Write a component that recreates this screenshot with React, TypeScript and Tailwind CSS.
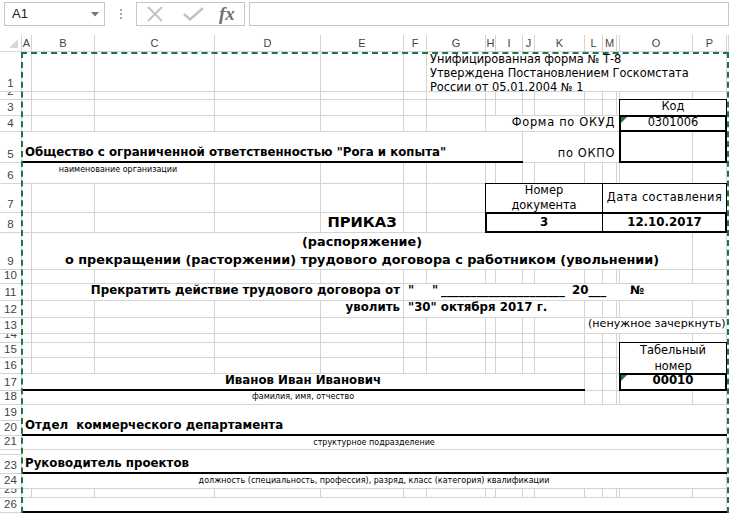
import React from "react";

type Seg = { r: number; c: number; cs?: number; rs?: number; cls?: string; node?: React.ReactNode };
type Ov = { r: number; c: number; cs?: number; rs?: number; cls: string };

const LETTERS = ["A", "B", "C", "D", "E", "F", "G", "H", "I", "J", "K", "L", "M", "", "O", "P", ""];
const ROWS = 26;
const COLS = 16;

const B = "font-bold text-[11.8px]";

const segs: Seg[] = [
  {
    r: 1, c: 7, cs: 10,
    cls: "flex flex-col justify-start pl-[3px] leading-[14px]",
    node: (
      <>
        <span>Унифицированная форма № Т-8</span>
        <span>Утверждена Постановлением Госкомстата</span>
        <span>России от 05.01.2004 № 1</span>
      </>
    ),
  },
  { r: 3, c: 15, cs: 2, cls: "flex items-end justify-center", node: "Код" },
  { r: 4, c: 8, cs: 7, cls: "flex items-end justify-end pr-[4px] tracking-[0.7px]", node: "Форма по ОКУД" },
  { r: 4, c: 15, cs: 2, cls: "flex items-end justify-center", node: "0301006" },
  {
    r: 5, c: 1, cs: 9, cls: "flex items-end pl-[3px] " + B,
    node: 'Общество с ограниченной ответственностью "Рога и копыта"',
  },
  { r: 5, c: 10, cs: 5, cls: "flex items-end justify-end pr-[4px] tracking-[0.65px]", node: "по ОКПО" },
  { r: 6, c: 1, cs: 3, cls: "flex items-start justify-center text-[8px] pt-[1px]", node: "наименование организации" },
  {
    r: 7, c: 8, cs: 5, cls: "flex flex-col items-center justify-center leading-[15px]",
    node: (
      <>
        <span>Номер</span>
        <span>документа</span>
      </>
    ),
  },
  { r: 7, c: 13, cs: 4, cls: "flex items-center justify-center tracking-[0.4px]", node: "Дата составления" },
  { r: 8, c: 5, cls: "flex items-center justify-center font-bold text-[14.7px]", node: "ПРИКАЗ" },
  { r: 8, c: 8, cs: 5, cls: "flex items-center justify-center " + B, node: "3" },
  { r: 8, c: 13, cs: 4, cls: "flex items-center justify-center " + B, node: "12.10.2017" },
  {
    r: 9, c: 2, cs: 14, cls: "flex flex-col items-center justify-center font-bold text-[12.8px] leading-[18.5px]",
    node: (
      <>
        <span>(распоряжение)</span>
        <span>о прекращении (расторжении) трудового договора с работником (увольнении)</span>
      </>
    ),
  },
  {
    r: 11, c: 2, cs: 4, cls: "flex items-end justify-end pr-[3px] " + B,
    node: "Прекратить действие трудового договора от",
  },
  {
    r: 11, c: 6, cs: 11, cls: "flex items-end " + B,
    node: (
      <>
        <span className="w-[4px] shrink-0" />
        <span className="w-[24px] shrink-0">"</span>
        <span className="w-[9px] shrink-0">"</span>
        <span className="w-[127px] shrink-0 overflow-hidden">_____________________</span>
        <span className="w-[4px] shrink-0" />
        <span className="w-[58px] shrink-0 whitespace-pre">20___</span>
        <span>№</span>
      </>
    ),
  },
  { r: 12, c: 5, cls: "flex items-end justify-end pr-[3px] " + B, node: "уволить" },
  { r: 12, c: 6, cs: 6, cls: "flex items-end pl-[4px] " + B, node: '"30" октября 2017 г.' },
  { r: 13, c: 12, cs: 5, cls: "flex items-end pl-[3px] text-[11.1px]", node: "(ненужное зачеркнуть)" },
  {
    r: 15, c: 15, cs: 2, rs: 2, cls: "flex flex-col items-center justify-center leading-[16.5px]",
    node: (
      <>
        <span>Табельный</span>
        <span>номер</span>
      </>
    ),
  },
  { r: 17, c: 1, cs: 11, cls: "flex items-end justify-center " + B, node: "Иванов Иван Иванович" },
  { r: 17, c: 15, cs: 2, cls: "flex items-end justify-center " + B, node: "00010" },
  { r: 18, c: 1, cs: 11, cls: "flex items-end justify-center text-[8px] pb-[1px]", node: "фамилия, имя, отчество" },
  {
    r: 19, c: 1, cs: 16, rs: 2, cls: "flex items-end pl-[3px] whitespace-pre " + B,
    node: "Отдел  коммерческого департамента",
  },
  { r: 21, c: 1, cs: 16, cls: "flex items-center justify-center text-[8px]", node: "структурное подразделение" },
  { r: 22, c: 1, cs: 16, rs: 2, cls: "flex items-end pl-[3px] " + B, node: "Руководитель проектов" },
  {
    r: 24, c: 1, cs: 16, cls: "flex items-end justify-center text-[8px] pb-[1px]",
    node: "должность (специальность, профессия), разряд, класс (категория) квалификации",
  },
  { r: 26, c: 1, cs: 16 },
];

const overlays: Ov[] = [
  { r: 3, c: 15, cs: 2, cls: "-mt-px -ml-px border-t border-l border-r border-black" },
  { r: 4, c: 15, cs: 2, rs: 2, cls: "-mt-px -ml-px border-2 border-black" },
  { r: 4, c: 15, cs: 2, cls: "border-b-2 border-black" },
  { r: 5, c: 1, cs: 9, cls: "border-b-2 border-black" },
  { r: 7, c: 8, cs: 5, cls: "-mt-px -ml-px border border-black" },
  { r: 7, c: 13, cs: 4, cls: "-mt-px -ml-px border border-black" },
  { r: 8, c: 8, cs: 9, cls: "-mt-px -ml-px border-2 border-black" },
  { r: 8, c: 13, cls: "-ml-px border-l border-black" },
  { r: 15, c: 15, cs: 2, rs: 2, cls: "-mt-px -ml-px border border-black" },
  { r: 17, c: 15, cs: 2, cls: "-mt-px -ml-px border-2 border-black" },
  { r: 17, c: 1, cs: 11, cls: "border-b-2 border-black" },
  { r: 19, c: 1, cs: 16, rs: 2, cls: "border-b-2 border-black" },
  { r: 22, c: 1, cs: 16, rs: 2, cls: "border-b-2 border-black" },
  { r: 26, c: 1, cs: 16, cls: "border-b-2 border-black" },
];

function area(r: number, c: number, cs = 1, rs = 1): React.CSSProperties {
  return { gridColumn: `${c + 1} / span ${cs}`, gridRow: `${r + 1} / span ${rs}` };
}

function Toolbar() {
  return (
    <div className="h-[35px] flex items-start pt-[2px] bg-white font-['Liberation_Sans',sans-serif]">
      <div className="ml-[4px] w-[101px] h-[24px] border border-[#c6c6c6] flex items-center justify-between pl-[7px] pr-[5px]">
        <span className="text-[13px] text-[#222]">A1</span>
        <svg width="8" height="5" viewBox="0 0 8 5">
          <path d="M0 0 L8 0 L4 4.5 Z" fill="#777" />
        </svg>
      </div>
      <div className="w-[31px] h-[24px] flex flex-col items-center justify-center gap-[2px]">
        <span className="w-[2px] h-[2px] bg-[#a8a8a8]" />
        <span className="w-[2px] h-[2px] bg-[#a8a8a8]" />
        <span className="w-[2px] h-[2px] bg-[#a8a8a8]" />
      </div>
      <div className="w-[109px] h-[24px] border border-[#c6c6c6] flex items-center">
        <svg className="ml-[9px]" width="18" height="16" viewBox="0 0 18 16">
          <path d="M2 1 L16 15 M16 1 L2 15" stroke="#c4c4c4" strokeWidth="2" />
        </svg>
        <svg className="ml-[19px]" width="21" height="14" viewBox="0 0 21 14">
          <path d="M1 7 L7 12.5 L20 1" stroke="#c4c4c4" strokeWidth="2.5" fill="none" />
        </svg>
        <span className="ml-[15px] font-['Liberation_Serif',serif] italic font-bold text-[19px] leading-none text-[#6f6f6f] -mt-[2px]">
          fx
        </span>
      </div>
      <div className="ml-[4px] flex-1 h-[24px] border border-[#c6c6c6]" />
    </div>
  );
}

export default function App() {
  const occ: boolean[][] = Array.from({ length: ROWS + 1 }, () => Array(COLS + 1).fill(false));
  segs.forEach((s) => {
    for (let i = 0; i < (s.rs || 1); i++)
      for (let j = 0; j < (s.cs || 1); j++) occ[s.r + i][s.c + j] = true;
  });

  const cells: React.ReactNode[] = [];
  for (let r = 1; r <= ROWS; r++) {
    for (let c = 1; c <= COLS; c++) {
      if (!occ[r][c]) {
        cells.push(<div key={`d${r}-${c}`} className="border-r border-b border-[#d4d4d4]" style={area(r, c)} />);
      }
    }
  }

  return (
    <div className="w-[729px] h-[514px] overflow-hidden bg-white">
      <Toolbar />
      <div className="grid grid-cols-[22px_10px_63px_120px_106px_83px_23px_59px_10px_27px_12px_50px_18px_14px_3px_73px_34px_2px] grid-rows-[17px_40px_8px_16px_16px_31px_21px_29px_20px_37px_14px_17px_17px_16px_9px_15px_16px_17px_14px_16px_15px_14px_5px_19px_15px_9px_15px] font-['DejaVu_Sans',sans-serif] text-[11.4px] text-black">
        {/* corner */}
        <div className="border-r border-b border-[#d4d4d4] flex items-end justify-end pr-[3px] pb-[3px]" style={{ gridColumn: "1", gridRow: "1" }}>
          <svg width="9" height="9" viewBox="0 0 9 9">
            <path d="M9 0 L9 9 L0 9 Z" fill="#d9d9d9" />
          </svg>
        </div>
        {/* column headers */}
        {LETTERS.map((l, i) => (
          <div
            key={`h${i}`}
            className="border-r border-b border-[#d4d4d4] flex items-center justify-center font-['Liberation_Sans',sans-serif] text-[11px] text-[#444] pt-[1px] overflow-hidden"
            style={{ gridColumn: `${i + 2}`, gridRow: "1" }}
          >
            {l}
          </div>
        ))}
        {/* row headers */}
        {Array.from({ length: ROWS }, (_, i) => (
          <div
            key={`rh${i}`}
            className="border-r border-b border-[#d4d4d4] flex items-end justify-center font-['Liberation_Sans',sans-serif] text-[11.5px] leading-[13px] text-[#444] overflow-hidden pb-[1px]"
            style={{ gridColumn: "1", gridRow: `${i + 2}` }}
          >
            {i + 1}
          </div>
        ))}
        {cells}
        {segs.map((s, i) => (
          <div
            key={`s${i}`}
            className={"border-r border-b border-[#d4d4d4] whitespace-nowrap z-[1] " + (s.cls || "")}
            style={area(s.r, s.c, s.cs, s.rs)}
          >
            {s.node}
          </div>
        ))}
        {overlays.map((o, i) => (
          <div key={`o${i}`} className={"pointer-events-none z-[2] " + o.cls} style={area(o.r, o.c, o.cs, o.rs)} />
        ))}
        {/* error indicators */}
        <div className="z-[3] self-start justify-self-start w-0 h-0 border-t-[6px] border-r-[6px] border-t-[#217346] border-r-transparent ml-px mt-px" style={area(4, 15)} />
        <div className="z-[3] self-start justify-self-start w-0 h-0 border-t-[6px] border-r-[6px] border-t-[#217346] border-r-transparent ml-px mt-px" style={area(17, 15)} />
        {/* copy marquee */}
        <div
          className="pointer-events-none z-[4] border-2 border-b-0 border-dashed border-[#217346] -ml-px -mr-[2px]"
          style={{ gridColumn: "2 / 18", gridRow: "2 / 28" }}
        />
      </div>
    </div>
  );
}
